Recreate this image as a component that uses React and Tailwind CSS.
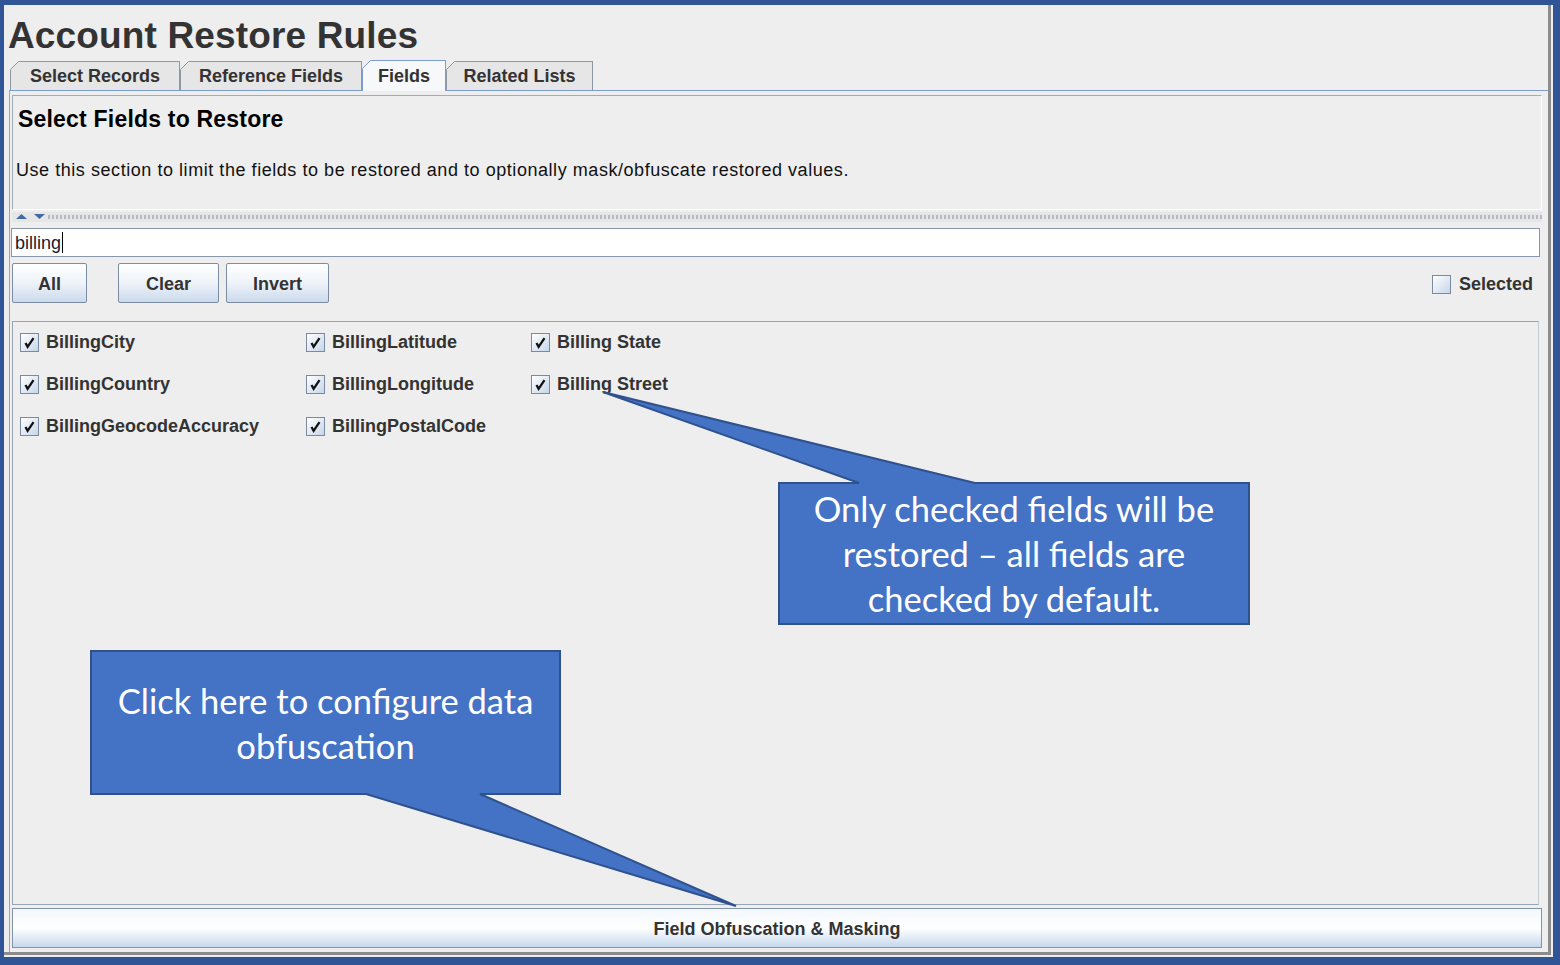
import React from "react";

const ui = "font-['Liberation_Sans',Arial,sans-serif]";

const Tab = ({ label, active, width }) => (
  <div
    className={`relative flex items-center justify-center border border-b-0 text-[18px] font-bold text-[#333333] ${width} ${
      active
        ? "h-[31px] -mb-px z-10 bg-[#f7f8fa] border-[#7b9dd3]"
        : "h-[29px] bg-[#e6e6e6] border-[#8d98a5]"
    }`}
  >
    <svg className="absolute -left-px -top-px" width="9" height="9" viewBox="0 0 9 9">
      <path d="M0 0H9L0 9Z" fill="#eeeeee" />
      <path d="M0.5 8.5L8.5 0.5" stroke={active ? "#7b9dd3" : "#8d98a5"} strokeWidth="1" />
    </svg>
    <span>{label}</span>
  </div>
);

const Check = ({ checked }) => (
  <span className="flex h-[19px] w-[19px] shrink-0 items-center justify-center border border-[#7a8a9f] bg-linear-to-br from-white to-[#c6d6ea]">
    {checked && (
      <svg width="13" height="13" viewBox="0 0 13 13">
        <path d="M2.5 7L4.6 10.8L10.5 2.2" stroke="#111" strokeWidth="2.3" fill="none" />
      </svg>
    )}
  </span>
);

const Button = ({ label, width }) => (
  <button
    className={`h-[40px] ${width} rounded-[2px] border border-[#7b8ca3] bg-linear-to-b from-white via-[#eef3f9] to-[#cbdaec] pt-[3px] text-[18px] font-bold text-[#333333]`}
  >
    {label}
  </button>
);

const fields = [
  ["BillingCity", "BillingLatitude", "Billing State"],
  ["BillingCountry", "BillingLongitude", "Billing Street"],
  ["BillingGeocodeAccuracy", "BillingPostalCode", null],
];

export default function App() {
  return (
    <div className={`relative h-[965px] w-[1560px] overflow-hidden bg-[#eeeeee] ${ui}`}>
      <div className="flex h-full flex-col border-t-[5px] border-l-[4px] border-r-[7px] border-b-[8px] border-[#2f5597]">
        <div className="mr-[2px] mb-[2px] flex flex-1 flex-col border-r-[3px] border-b-[3px] border-[#8c8c8c]">
          {/* title */}
          <div className="h-[55px] pl-[4px] pt-[12px]">
            <h1 className="text-[37px] font-bold leading-[37px] tracking-[0.15px] text-[#333333]">
              Account Restore Rules
            </h1>
          </div>

          {/* tabs */}
          <div className="flex h-[30px] items-end pl-[6px]">
            <Tab label="Select Records" width="w-[170px]" />
            <Tab label="Reference Fields" width="w-[182px]" />
            <Tab label="Fields" width="w-[84px]" active />
            <Tab label="Related Lists" width="w-[147px]" />
          </div>

          {/* tab panel */}
          <div className="ml-[5px] flex flex-1 flex-col border-t border-l border-t-[#7b9dd3] border-l-[#9aa5b3] bg-[#eeeeee] pl-[2px] pr-[6px]">
            <div className="mt-[4px] h-[115px] border border-t-[#a3abb6] border-l-[#a3abb6] border-r-white border-b-white pl-[5px] pt-[10px]">
              <div className="text-[23px] font-bold leading-[26px] tracking-[0.2px] text-black">Select Fields to Restore</div>
              <div className="mt-[27px] -ml-[2px] text-[18px] leading-[22px] tracking-[0.55px] text-[#111111]">
                Use this section to limit the fields to be restored and to optionally mask/obfuscate restored values.
              </div>
            </div>

            {/* split divider */}
            <div className="mt-[2px] flex h-[10px] items-center bg-[#e6e6e6]">
              <svg className="ml-[3px] shrink-0" width="32" height="8" viewBox="0 0 32 8">
                <path d="M1 6L6.5 1L12 6Z" fill="#416ba6" />
                <path d="M19 1L30 1L24.5 6Z" fill="#416ba6" />
              </svg>
              <div className="h-[4px] flex-1 bg-[radial-gradient(circle,#b4bbc4_0.9px,transparent_1.1px)] bg-[length:4px_2px]" />
            </div>

            {/* filter input */}
            <div className="mt-[6px] -ml-px mr-[2px] flex h-[29px] items-center border border-[#8796aa] bg-white pl-[3px]">
              <span className="text-[18px] leading-[22px] text-[#1a1a2e]">billing</span>
              <span className="ml-px h-[21px] w-px bg-black" />
            </div>

            {/* buttons */}
            <div className="mt-[6px] flex h-[40px] items-center pr-[9px]">
              <Button label="All" width="w-[75px]" />
              <div className="ml-[31px]">
                <Button label="Clear" width="w-[101px]" />
              </div>
              <div className="ml-[7px]">
                <Button label="Invert" width="w-[103px]" />
              </div>
              <div className="ml-auto flex items-center gap-[8px] pt-[3px]">
                <Check />
                <span className="text-[18px] font-bold text-[#333333]">Selected</span>
              </div>
            </div>

            {/* field list */}
            <div className="mt-[18px] mr-[3px] flex-1 border border-t-[#9aa5b3] border-l-[#9aa5b3] border-r-[#c5cbd3] border-b-[#9aa5b3] pl-[7px]">
              <div className="-mt-px grid grid-cols-[286px_225px_1fr]">
                {fields.map((row, i) =>
                  row.map((f, j) => (
                    <div key={`${i}-${j}`} className="flex h-[42px] items-center gap-[7px]">
                      {f && (
                        <>
                          <Check checked />
                          <span className="text-[18px] font-bold text-[#333333]">{f}</span>
                        </>
                      )}
                    </div>
                  ))
                )}
              </div>
            </div>

            {/* bottom button */}
            <button className="mt-[3px] mb-[4px] h-[40px] border border-[#8494a8] bg-linear-to-b from-[#f3f7fc] via-white to-[#c6d8ec] pt-[3px] text-[18px] font-bold text-[#333333]">
              Field Obfuscation &amp; Masking
            </button>
          </div>
        </div>
      </div>

      {/* callouts */}
      <svg className="pointer-events-none absolute left-0 top-0" width="1560" height="965" viewBox="0 0 1560 965">
        <path
          d="M779 483H859L603 392L975 483H1249V624H779Z"
          fill="#4472c4"
          stroke="#2f528f"
          strokeWidth="2"
        />
        <path
          d="M91 651H560V794H480L736 906L366 794H91Z"
          fill="#4472c4"
          stroke="#2f528f"
          strokeWidth="2"
        />
      </svg>
      <div className="pointer-events-none absolute left-[779px] top-[483px] flex h-[141px] w-[470px] items-center justify-center text-center font-['Lato',sans-serif] text-[34.5px] leading-[45px] text-white">
        Only checked fields will be
        <br />
        restored – all fields are
        <br />
        checked by default.
      </div>
      <div className="pointer-events-none absolute left-[91px] top-[651px] flex h-[143px] w-[469px] items-center justify-center text-center font-['Lato',sans-serif] text-[34.5px] leading-[45px] text-white">
        Click here to configure data
        <br />
        obfuscation
      </div>
    </div>
  );
}
